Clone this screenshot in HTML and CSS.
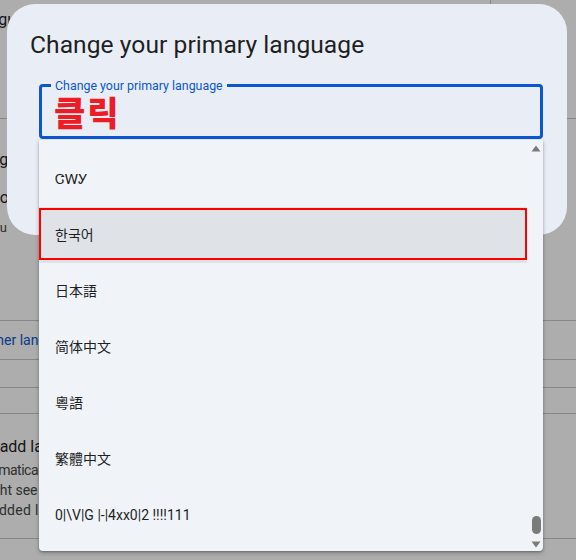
FILE: index.html
```html
<!DOCTYPE html>
<html lang="en">
<head>
<meta charset="utf-8">
<title>Change your primary language</title>
<link rel="stylesheet" href="styles.css">
</head>
<body>
<div class="page">
  <header class="header">
    <h1 class="heading">Language</h1>
    <div class="header-side"></div>
  </header>
  <div class="divider d1"></div>
  <section class="section">
    <h2 class="row-title">Preferred language</h2>
    <p class="row-value">English (United Kingdom)</p>
    <p class="row-desc"><span>Google products show content to you</span></p>
  </section>
  <div class="divider d2"></div>
  <a class="link-row">Add another language</a>
  <div class="divider"></div>
  <div class="divider d3"></div>
  <div class="divider d4"></div>
  <section class="section">
    <h2 class="auto-title">Automatically add languages</h2>
    <p class="auto-desc l1">Automatically add languages based on your activity</p>
    <p class="auto-desc l2">You might see content in these</p>
    <p class="auto-desc l3">added languages too.</p>
  </section>
  <div class="divider d5"></div>
</div>

<div class="scrim"></div>

<div class="dialog" role="dialog">
  <h1 class="dialog-title">Change your primary language</h1>
  <div class="field">
    <span class="field-label">Change your primary language</span>
    <span class="field-value">클릭</span>
  </div>
</div>

<div class="listbox" role="listbox">
  <ul class="options">
    <li class="option chr">ᏣᎳᎩ</li>
    <li class="option ko selected">한국어</li>
    <li class="option ja">日本語</li>
    <li class="option sc">简体中文</li>
    <li class="option tc">粵語</li>
    <li class="option tc">繁體中文</li>
    <li class="option">0|\V|G |-|4xx0|2 !!!!111</li>
  </ul>
  <div class="scrollbar">
    <svg class="arrow" width="10" height="7" viewBox="0 0 10 7"><path d="M5 0.5 L9.5 6.5 L0.5 6.5 Z" fill="#7b7b7b"/></svg>
    <div class="track"></div>
    <div class="thumb"></div>
    <svg class="arrow down" width="10" height="7" viewBox="0 0 10 7"><path d="M0.5 0.5 L9.5 0.5 L5 6.5 Z" fill="#7b7b7b"/></svg>
  </div>
</div>
</body>
</html>
```
FILE: styles.css
```css
* { box-sizing: border-box; }
html, body { margin: 0; padding: 0; }
body {
  width: 576px;
  height: 560px;
  overflow: hidden;
  position: relative;
  font-family: Roboto, "Noto Sans", sans-serif;
  background: #ffffff;
}
h1, h2, p, ul { margin: 0; padding: 0; font-weight: 400; }

/* ---------- background page ---------- */
.page {
  width: 576px;
  height: 560px;
  overflow: hidden;
  color: #1f1f1f;
}
.header {
  height: 40px;
  display: flex;
  align-items: center;
}
.heading {
  flex: 1;
  font-size: 16px;
  line-height: 24px;
  white-space: nowrap;
  text-indent: -28px;
}
.header-side {
  width: 86px;
  height: 40px;
  border-left: 1px solid #c4c7c5;
}
.divider { border-top: 1px solid #c4c7c5; height: 0; }
.d1 { margin-top: 78px; }
.d2 { margin-top: 82px; }
.d3 { margin-top: 27px; }
.d4 { margin-top: 25px; }
.d5 { margin-top: 18px; }

.row-title {
  margin-top: 29px;
  font-size: 16px;
  line-height: 24px;
  white-space: nowrap;
  text-indent: -92px;
}
.row-value {
  margin-top: 14px;
  font-size: 16px;
  line-height: 24px;
  white-space: nowrap;
  text-indent: -152px;
}
.row-desc {
  margin-top: 8px;
  width: 7px;
  display: flex;
  justify-content: flex-end;
  font-size: 13px;
  line-height: 20px;
  color: #444746;
  white-space: nowrap;
}
.row-desc span { flex: none; }
.link-row {
  display: block;
  height: 38px;
  line-height: 38px;
  font-size: 14px;
  color: #0b57d0;
  white-space: nowrap;
  text-indent: -60px;
}
.auto-title {
  margin-top: 21px;
  font-size: 16px;
  line-height: 24px;
  white-space: nowrap;
  text-indent: -102px;
}
.auto-desc {
  font-size: 14px;
  line-height: 20px;
  color: #444746;
  white-space: nowrap;
}
.l1 { margin-top: 1px; text-indent: -29px; letter-spacing: -0.5px; }
.l2 { text-indent: -51px; }
.l3 { text-indent: -9px; letter-spacing: 0.3px; }

/* ---------- overlay ---------- */
.scrim {
  position: absolute;
  inset: 0;
  background: rgba(0, 0, 0, 0.32);
}

.dialog {
  position: absolute;
  left: 7px;
  top: 4px;
  width: 560px;
  height: 231px;
  border-radius: 28px;
  background: #e9eef6;
  padding: 24px 24px 0 23px;
}
.dialog-title {
  font-family: Roboto, sans-serif;
  font-size: 24.6px;
  line-height: 33px;
  letter-spacing: 0.05px;
  color: #1f1f1f;
  white-space: nowrap;
}
.field {
  position: relative;
  margin: 23px 0 0 9px;
  width: 504px;
  height: 55px;
  border: 3px solid #0b57d0;
  border-radius: 4px;
  padding: 4px 0 0 12px;
}
.field-label {
  position: absolute;
  left: 9px;
  top: -9px;
  padding: 0 4px;
  background: #e9eef6;
  font-size: 12.4px;
  line-height: 16px;
  color: #0b57d0;
  white-space: nowrap;
}
.field-value {
  display: block;
  font-family: "Noto Sans CJK KR", sans-serif;
  font-weight: 900;
  font-size: 34px;
  line-height: 41px;
  letter-spacing: 2px;
  color: #ee1c25;
}

.listbox {
  position: absolute;
  left: 39px;
  top: 140px;
  width: 504px;
  height: 411px;
  background: #f0f4f9;
  border-radius: 0 0 4px 4px;
  box-shadow: 0 2px 4px rgba(0, 0, 0, 0.25), 0 1px 2px rgba(0, 0, 0, 0.2);
  display: flex;
  overflow: hidden;
}
.options {
  list-style: none;
  flex: 1;
  padding-top: 11px;
}
.option {
  position: relative;
  height: 56px;
  line-height: 56px;
  padding-left: 16px;
  font-size: 14px;
  color: #1f1f1f;
  white-space: nowrap;
  font-family: Roboto, "Noto Sans CJK SC", "DejaVu Sans", sans-serif;
}
.chr { font-family: Roboto, "DejaVu Sans", "Noto Sans", sans-serif; }
.ko { font-family: Roboto, "Noto Sans CJK KR", sans-serif; }
.ja { font-family: Roboto, "Noto Sans CJK JP", sans-serif; }
.sc { font-family: Roboto, "Noto Sans CJK SC", sans-serif; }
.tc { font-family: Roboto, "Noto Sans CJK TC", sans-serif; }
.selected { background: #dfe3e8; }
.selected::after {
  content: "";
  position: absolute;
  left: 0;
  right: 0;
  top: 1px;
  bottom: 3px;
  border: 2px solid #ff0000;
}
.scrollbar {
  width: 16px;
  display: flex;
  flex-direction: column;
  align-items: center;
  padding: 5px 0 3px 2px;
}
.arrow { display: block; flex: none; }
.track { flex: 1; }
.thumb {
  width: 9px;
  height: 18px;
  border-radius: 5px;
  background: #7b7b7b;
  margin-bottom: 7px;
}
```
